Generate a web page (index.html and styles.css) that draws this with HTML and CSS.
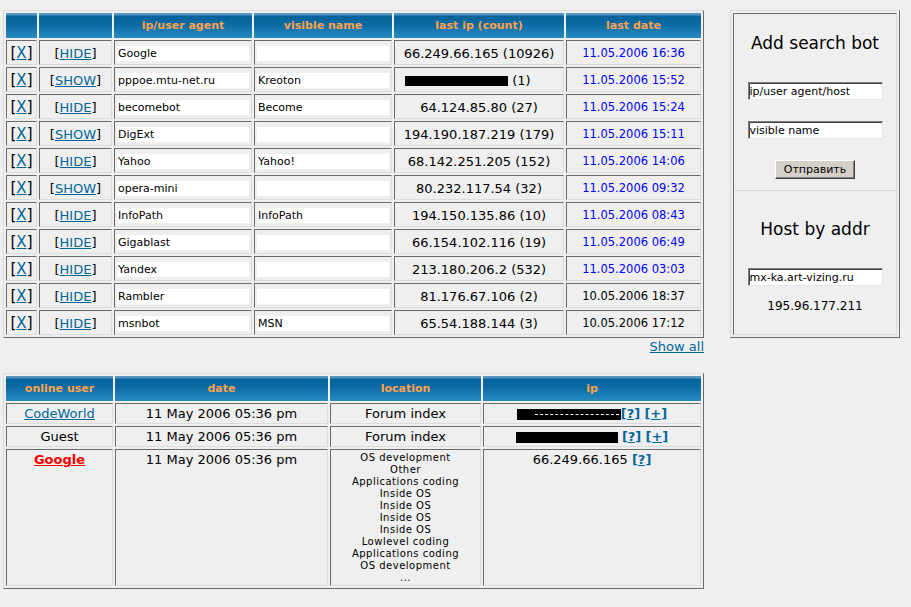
FILE: index.html
```html
<!DOCTYPE html>
<html>
<head>
<meta charset="utf-8">
<title>Search bots</title>
<link rel="stylesheet" href="styles.css">
</head>
<body>
<div class="page">
  <div class="top">
    <table class="grid bots">
      <colgroup>
        <col class="c-del"><col class="c-vis"><col class="c-agent"><col class="c-name"><col class="c-ip"><col class="c-date">
      </colgroup>
      <thead>
        <tr><th></th><th></th><th>ip/user agent</th><th>visible name</th><th>last ip (count)</th><th>last date</th></tr>
      </thead>
      <tbody>
        <tr><td class="del">[<a href="#">X</a>]</td><td class="vis">[<a href="#">HIDE</a>]</td><td><div class="field">Google</div></td><td><div class="field"></div></td><td class="ip">66.249.66.165 (10926)</td><td class="date new">11.05.2006 16:36</td></tr>
        <tr><td class="del">[<a href="#">X</a>]</td><td class="vis">[<a href="#">SHOW</a>]</td><td><div class="field">pppoe.mtu-net.ru</div></td><td><div class="field">Kreoton</div></td><td class="ip redacted-ip"><span class="bar bar-top"></span> (1)</td><td class="date new">11.05.2006 15:52</td></tr>
        <tr><td class="del">[<a href="#">X</a>]</td><td class="vis">[<a href="#">HIDE</a>]</td><td><div class="field">becomebot</div></td><td><div class="field">Become</div></td><td class="ip">64.124.85.80 (27)</td><td class="date new">11.05.2006 15:24</td></tr>
        <tr><td class="del">[<a href="#">X</a>]</td><td class="vis">[<a href="#">SHOW</a>]</td><td><div class="field">DigExt</div></td><td><div class="field"></div></td><td class="ip">194.190.187.219 (179)</td><td class="date new">11.05.2006 15:11</td></tr>
        <tr><td class="del">[<a href="#">X</a>]</td><td class="vis">[<a href="#">HIDE</a>]</td><td><div class="field">Yahoo</div></td><td><div class="field">Yahoo!</div></td><td class="ip">68.142.251.205 (152)</td><td class="date new">11.05.2006 14:06</td></tr>
        <tr><td class="del">[<a href="#">X</a>]</td><td class="vis">[<a href="#">SHOW</a>]</td><td><div class="field">opera-mini</div></td><td><div class="field"></div></td><td class="ip">80.232.117.54 (32)</td><td class="date new">11.05.2006 09:32</td></tr>
        <tr><td class="del">[<a href="#">X</a>]</td><td class="vis">[<a href="#">HIDE</a>]</td><td><div class="field">InfoPath</div></td><td><div class="field">InfoPath</div></td><td class="ip">194.150.135.86 (10)</td><td class="date new">11.05.2006 08:43</td></tr>
        <tr><td class="del">[<a href="#">X</a>]</td><td class="vis">[<a href="#">HIDE</a>]</td><td><div class="field">Gigablast</div></td><td><div class="field"></div></td><td class="ip">66.154.102.116 (19)</td><td class="date new">11.05.2006 06:49</td></tr>
        <tr><td class="del">[<a href="#">X</a>]</td><td class="vis">[<a href="#">HIDE</a>]</td><td><div class="field">Yandex</div></td><td><div class="field"></div></td><td class="ip">213.180.206.2 (532)</td><td class="date new">11.05.2006 03:03</td></tr>
        <tr><td class="del">[<a href="#">X</a>]</td><td class="vis">[<a href="#">HIDE</a>]</td><td><div class="field">Rambler</div></td><td><div class="field"></div></td><td class="ip">81.176.67.106 (2)</td><td class="date">10.05.2006 18:37</td></tr>
        <tr><td class="del">[<a href="#">X</a>]</td><td class="vis">[<a href="#">HIDE</a>]</td><td><div class="field">msnbot</div></td><td><div class="field">MSN</div></td><td class="ip">65.54.188.144 (3)</td><td class="date">10.05.2006 17:12</td></tr>
      </tbody>
    </table>

    <div class="side">
      <div class="side-inner">
        <div class="side-title first">Add search bot</div>
        <input class="side-input gap-big" type="text" value="ip/user agent/host">
        <input class="side-input gap-mid" type="text" value="visible name">
        <button class="side-btn" type="button">Отправить</button>
        <div class="divider"></div>
        <div class="side-title second">Host by addr</div>
        <input class="side-input gap-big" type="text" value="mx-ka.art-vizing.ru">
        <div class="side-result">195.96.177.211</div>
      </div>
    </div>
  </div>

  <div class="showall"><a href="#">Show all</a></div>

  <table class="grid online">
    <colgroup>
      <col class="o-user"><col class="o-date"><col class="o-loc"><col class="o-ip">
    </colgroup>
    <thead>
      <tr><th>online user</th><th>date</th><th>location</th><th>ip</th></tr>
    </thead>
    <tbody>
      <tr class="short"><td><a href="#">CodeWorld</a></td><td>11 May 2006 05:36 pm</td><td>Forum index</td><td><span class="bar bar-a"><span class="dash"></span></span><a class="tool" href="#">[?]</a> <a class="tool" href="#">[+]</a></td></tr>
      <tr class="short"><td>Guest</td><td>11 May 2006 05:36 pm</td><td>Forum index</td><td><span class="bar bar-b"></span> <a class="tool" href="#">[?]</a> <a class="tool" href="#">[+]</a></td></tr>
      <tr class="tall"><td><a class="bot" href="#">Google</a></td><td>11 May 2006 05:36 pm</td><td class="loc">OS development<br>Other<br>Applications coding<br>Inside OS<br>Inside OS<br>Inside OS<br>Inside OS<br>Lowlevel coding<br>Applications coding<br>OS development<br>...</td><td>66.249.66.165 <a class="tool" href="#">[?]</a></td></tr>
    </tbody>
  </table>
</div>
</body>
</html>
```

FILE: styles.css
```css
html, body {
  margin: 0;
  padding: 0;
  background: #efefef;
}

body {
  font-family: "DejaVu Sans", Verdana, sans-serif;
  color: #000;
  padding: 10px 0 0 3px;
}

a {
  color: #006699;
  text-decoration: underline;
}

.page {
  width: 897px;
}

.top {
  display: flex;
  align-items: stretch;
  gap: 26px;
}

/* ---------- grid tables ---------- */
.grid {
  border-collapse: separate;
  border-spacing: 2px;
  border: 1px solid;
  border-color: #dcdcdc #6b6b6b #6b6b6b #dcdcdc;
  table-layout: fixed;
  width: 701px;
  background: #efefef;
  flex: none;
}

.grid th {
  box-sizing: border-box;
  height: 25px;
  padding: 0;
  border: none;
  color: #ffa34f;
  font-size: 11px;
  font-weight: bold;
  text-align: center;
  vertical-align: middle;
  background: linear-gradient(to bottom,
    #5595bf 0, #5595bf 2px,
    #05639a 3px, #0a6aa1 45%, #2a8bc3 100%);
}

.grid td {
  box-sizing: border-box;
  padding: 0;
  border: 1px solid;
  border-color: #6b6b6b #dcdcdc #dcdcdc #6b6b6b;
  text-align: center;
  vertical-align: middle;
  font-size: 13px;
  white-space: nowrap;
}

.bots td {
  height: 25px;
  padding-top: 1px;
}

.c-del { width: 31px; }
.c-vis { width: 73px; }
.c-agent { width: 138px; }
.c-name { width: 138px; }
.c-ip { width: 170px; }
.c-date { width: 135px; }

.bots td.del {
  font-size: 15px;
}

.bots td.vis {
  font-size: 13px;
}

.field {
  background: #fff;
  height: 15px;
  margin: 0 2px;
  padding-left: 1px;
  text-align: left;
  font-size: 11px;
  line-height: 15px;
  overflow: hidden;
}

.bots td.ip {
  font-size: 13px;
}

.bots td.date {
  font-size: 11.5px;
}

.bots td.date.new {
  color: #0000ff;
}

.redacted-ip {
  text-align: left !important;
  padding-left: 10px !important;
}

.bar {
  display: inline-block;
  background: #000;
  vertical-align: middle;
  position: relative;
}

.bar-top {
  width: 103px;
  height: 10px;
}

.bar-a {
  width: 104px;
  height: 11px;
}

.bar-b {
  width: 102px;
  height: 11px;
}

.dash {
  position: absolute;
  left: 18px;
  right: 2px;
  top: 5px;
  border-top: 1px dashed #fff;
}

/* ---------- side panel ---------- */
.side {
  box-sizing: border-box;
  width: 170px;
  border: 1px solid;
  border-color: #dcdcdc #6b6b6b #6b6b6b #dcdcdc;
  padding: 2px;
  display: flex;
}

.side-inner {
  flex: 1;
  border: 1px solid;
  border-color: #6b6b6b #dcdcdc #dcdcdc #6b6b6b;
  display: flex;
  flex-direction: column;
  align-items: center;
}

.side-title {
  font-size: 17px;
  line-height: 20px;
  text-align: center;
}

.side-title.first {
  margin-top: 19px;
}

.side-title.second {
  margin-top: 28px;
}

.side-input {
  box-sizing: border-box;
  width: 135px;
  height: 18px;
  margin: 0;
  padding: 0 1px;
  font-family: "DejaVu Sans", Verdana, sans-serif;
  font-size: 11px;
  color: #000;
  background: #fff;
  border: 1px solid;
  border-color: #808080 #e6e6e6 #e6e6e6 #808080;
  box-shadow: inset 1px 1px 0 #404040;
  outline: none;
}

.gap-big {
  margin-top: 29px;
}

.gap-mid {
  margin-top: 21px;
}

.side-btn {
  box-sizing: border-box;
  margin-top: 21px;
  width: 80px;
  height: 19px;
  padding: 0;
  font-family: "DejaVu Sans", Verdana, sans-serif;
  font-size: 11px;
  color: #000;
  background: #d4d0c8;
  border: 1px solid;
  border-color: #ffffff #404040 #404040 #ffffff;
  box-shadow: inset -1px -1px 0 #808080;
}

.divider {
  align-self: stretch;
  margin: 11px 1px 0;
  height: 1px;
  background: #cfd8e0;
}

.side-result {
  margin-top: 12px;
  font-size: 12px;
  line-height: 16px;
}

/* ---------- show all ---------- */
.showall {
  width: 701px;
  margin-top: 1px;
  text-align: right;
  font-size: 13px;
  line-height: 16px;
}

/* ---------- online table ---------- */
.online {
  margin-top: 18px;
}

.o-user { width: 107px; }
.o-date { width: 213px; }
.o-loc { width: 151px; }
.o-ip { width: 218px; }

.online tr.short td {
  height: 21px;
}

.online tr.tall td {
  vertical-align: top;
  padding: 2px 0 1px;
  line-height: 16px;
}

.online tr.tall td.loc {
  font-size: 10px;
  letter-spacing: 0.5px;
  line-height: 12px;
}

.tool {
  font-weight: bold;
}

.bot {
  color: #ff0000;
  font-weight: bold;
}
```
